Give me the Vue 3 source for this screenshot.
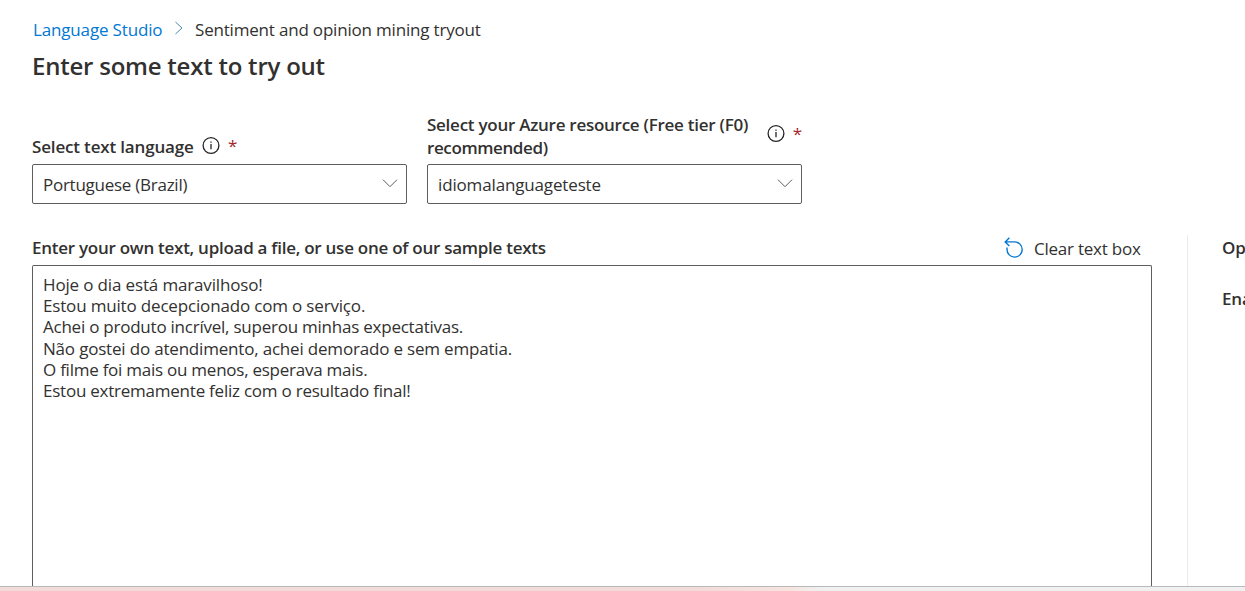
<script setup>
const lines = [
  { text: 'Hoje o dia está maravilhoso!', cls: 'l1' },
  { text: 'Estou muito decepcionado com o serviço.', cls: 'l2' },
  { text: 'Achei o produto incrível, superou minhas expectativas.', cls: 'l3' },
  { text: 'Não gostei do atendimento, achei demorado e sem empatia.', cls: 'l4' },
  { text: 'O filme foi mais ou menos, esperava mais.', cls: 'l5' },
  { text: 'Estou extremamente feliz com o resultado final!', cls: 'l6' },
]
</script>

<template>
  <div class="page">
    <nav class="crumbs">
      <a class="home">Language Studio</a>
      <svg class="sep" width="10" height="14" viewBox="0 0 10 14"><path d="M1.5 1 L8 7 L1.5 13" /></svg>
      <span class="current">Sentiment and opinion mining tryout</span>
    </nav>
    <h1>Enter some text to try out</h1>

    <div class="fields">
      <div class="field">
        <div class="label-row single">
          <label class="lang-label">Select text language</label>
          <svg class="info" width="18" height="18" viewBox="0 0 18 18"><circle cx="9" cy="9" r="7.9" /><path d="M9 7.6V12.8" /><path d="M9 5V6.3" /></svg>
          <span class="req">*</span>
        </div>
        <div class="select">
          <span class="lang-value">Portuguese (Brazil)</span>
          <svg width="16" height="10" viewBox="0 0 16 10"><path d="M1 1.2 L8 8.2 L15 1.2" /></svg>
        </div>
      </div>
      <div class="field">
        <div class="label-row double">
          <label class="res-label"><span class="res1">Select your Azure resource (Free tier (F0)</span><br /><span class="res2">recommended)</span></label>
          <svg class="info" width="18" height="18" viewBox="0 0 18 18"><circle cx="9" cy="9" r="7.9" /><path d="M9 7.6V12.8" /><path d="M9 5V6.3" /></svg>
          <span class="req">*</span>
        </div>
        <div class="select">
          <span class="res-value">idiomalanguageteste</span>
          <svg width="16" height="10" viewBox="0 0 16 10"><path d="M1 1.2 L8 8.2 L15 1.2" /></svg>
        </div>
      </div>
    </div>

    <div class="workspace">
      <section class="editor">
        <header>
          <span class="prompt">Enter your own text, upload a file, or use one of our sample texts</span>
          <button type="button">
            <svg width="20" height="21" viewBox="0 0 20 21"><path d="M5.4 0.8 L1.2 4.9 L5.4 9 M1.2 4.9 H10.6 A7.6 7.6 0 1 1 3 12.5 V10.6" /></svg>
            <span class="clear">Clear text box</span>
          </button>
        </header>
        <div class="textbox">
          <div v-for="l in lines" :key="l.cls"><span :class="l.cls">{{ l.text }}</span></div>
        </div>
      </section>
      <aside>
        <div>Op</div>
        <div>Ena</div>
      </aside>
    </div>
    <footer></footer>
  </div>
</template>

<style>
body { overflow: hidden; }
</style>

<style scoped>
.page {
  width: 1245px;
  height: 591px;
  box-sizing: border-box;
  display: flex;
  flex-direction: column;
  overflow: hidden;
  background: #fff;
  color: #323130;
  font-family: "Open Sans", "Noto Sans", sans-serif;
  font-size: 17px;
  letter-spacing: -0.2px;
  white-space: nowrap;
}
svg { fill: none; flex: none; }
.crumbs { display: flex; align-items: center; height: 24px; margin: 17px 0 0 33px; }
.home { width: 129px; color: #0078d4; letter-spacing: -0.16px; }
.sep { margin: 0 19px 0 12px; transform: translateY(-1px); stroke: #4a86ae; width: 10px; }
.current { margin-left: -8px; letter-spacing: -0.19px; }
h1 { margin: 8px 0 0 32px; height: 34px; line-height: 34px; font-size: 24px; font-weight: 600; letter-spacing: -0.23px; }
.fields { display: flex; gap: 20px; height: 121px; margin-left: 32px; align-items: flex-end; }
.field { width: 375px; }
label { font-weight: 600; }
.label-row { display: flex; align-items: center; position: relative; }
.single { height: 34px; }
.lang-label { width: 170px; line-height: 34px; letter-spacing: -0.165px; }
.single .info, .single .req { transform: translateY(-1.5px); }
.double { height: 51px; }
.res-label { width: 341px; line-height: 23px; margin-top: -5px; }
.res1 { letter-spacing: -0.26px; }
.res2 { letter-spacing: -0.39px; }
.double .info { transform: translateY(-5.5px); }
.double .req { transform: translateY(-5px); }
.info { stroke: #252423; stroke-width: 1.3; }
.req { color: #a4262c; margin-left: 8px; line-height: 20px; }
.select {
  height: 40px; box-sizing: border-box; display: flex; align-items: center; justify-content: space-between;
  border: 1px solid #605e5c; border-radius: 2px; padding: 0 8px 0 10px;
}
.select svg { stroke: #605e5c; transform: translateY(-0.5px); }
.lang-value { letter-spacing: -0.26px; }
.res-value { letter-spacing: -0.15px; }
.workspace { display: flex; flex: 1; min-height: 0; margin: 31px 0 0 32px; }
.editor { width: 1120px; flex: none; display: flex; flex-direction: column; }
header { height: 30px; flex: none; display: flex; justify-content: space-between; align-items: center; }
.prompt { font-weight: 600; transform: translateY(-3px); letter-spacing: -0.265px; }
button { display: flex; align-items: center; border: 0; padding: 0; background: none; font: inherit; color: inherit; width: 148px; transform: translateY(-2px); }
button svg { stroke: #0078d4; stroke-width: 1.4; margin-right: 10px; transform: translateY(-1px); }
.clear { letter-spacing: -0.23px; }
.textbox { flex: 1; box-sizing: border-box; border: 1px solid #605e5c; border-bottom: 0; border-radius: 2px 2px 0 0; padding: 8px 10px; line-height: 21.2px; }
.textbox div { height: 21.2px; }
.l1 { letter-spacing: -0.15px; }
.l2 { letter-spacing: -0.17px; }
.l3 { letter-spacing: -0.235px; }
.l4 { letter-spacing: -0.19px; }
.l5 { letter-spacing: -0.25px; }
.l6 { letter-spacing: -0.235px; }
aside { flex: none; width: 120px; margin-left: 35px; border-left: 1px solid #edebe9; padding-left: 34px; font-weight: 600; }
aside div { height: 26px; line-height: 26px; margin-bottom: 25px; }
footer {
  height: 5px; flex: none; box-sizing: border-box; border-top: 1px solid #b9b9b9;
  background: linear-gradient(90deg, #f2dcda 0, #f2dcda 700px, #f6e4df 790px, #f0f0f0 820px);
}
</style>
